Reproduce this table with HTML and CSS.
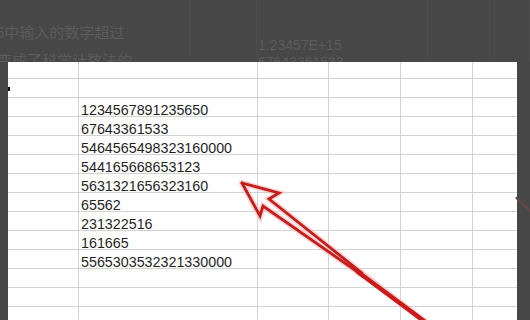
FILE: index.html
```html
<!DOCTYPE html>
<html>
<head>
<meta charset="utf-8">
<link rel="stylesheet" href="styles.css">
</head>
<body>
<div class="page">
  <div class="top">
    <div class="tcol c1">
      <div class="faint cjk l1">6中输入的数字超过</div>
      <div class="faint cjk l2">变成了科学计数法的</div>
    </div>
    <div class="tcol c2"></div>
    <div class="tcol c3">
      <div class="faint num">1.23457E+15</div>
      <div class="faint num">67643361533</div>
    </div>
    <div class="tcol c4"></div>
    <div class="tcol c5"></div>
  </div>
  <div class="main">
    <div class="sheet">
      <div class="cell"></div><div class="cell"></div><div class="cell"></div><div class="cell"></div><div class="cell"></div><div class="cell last"></div>
      <div class="cell mark"></div><div class="cell"></div><div class="cell"></div><div class="cell"></div><div class="cell"></div><div class="cell last"></div>
      <div class="cell"></div><div class="cell val">1234567891235650</div><div class="cell"></div><div class="cell"></div><div class="cell"></div><div class="cell last"></div>
      <div class="cell"></div><div class="cell val">67643361533</div><div class="cell"></div><div class="cell"></div><div class="cell"></div><div class="cell last"></div>
      <div class="cell"></div><div class="cell val">5464565498323160000</div><div class="cell"></div><div class="cell"></div><div class="cell"></div><div class="cell last"></div>
      <div class="cell"></div><div class="cell val">544165668653123</div><div class="cell"></div><div class="cell"></div><div class="cell"></div><div class="cell last"></div>
      <div class="cell"></div><div class="cell val">5631321656323160</div><div class="cell"></div><div class="cell"></div><div class="cell"></div><div class="cell last"></div>
      <div class="cell"></div><div class="cell val">65562</div><div class="cell"></div><div class="cell"></div><div class="cell"></div><div class="cell last"></div>
      <div class="cell"></div><div class="cell val">231322516</div><div class="cell"></div><div class="cell"></div><div class="cell"></div><div class="cell last"></div>
      <div class="cell"></div><div class="cell val">161665</div><div class="cell"></div><div class="cell"></div><div class="cell"></div><div class="cell last"></div>
      <div class="cell"></div><div class="cell val">5565303532321330000</div><div class="cell"></div><div class="cell"></div><div class="cell"></div><div class="cell last"></div>
      <div class="cell"></div><div class="cell"></div><div class="cell"></div><div class="cell"></div><div class="cell"></div><div class="cell last"></div>
      <div class="cell"></div><div class="cell"></div><div class="cell"></div><div class="cell"></div><div class="cell"></div><div class="cell last"></div>
      <div class="cell"></div><div class="cell"></div><div class="cell"></div><div class="cell"></div><div class="cell"></div><div class="cell last"></div>
    </div>
  </div>
  <svg class="arrow" width="530" height="320" viewBox="0 0 530 320">
    <g fill="none" stroke-linejoin="miter" stroke-linecap="round">
      <g stroke="#f6c2c2" stroke-width="6" opacity="0.7">
        <polyline points="242,183 279,193 269,199 362,273 432,327"/>
        <polyline points="242,183 260,216 263,206 362,275"/>
      </g>
      <g stroke="#c51c1c" stroke-width="2.8">
        <polyline points="242,183 279,193 269,199 362,273"/>
        <polyline points="242,183 260,216 263,206 362,275"/>
      </g>
      <line x1="358" y1="272" x2="432" y2="327" stroke="#cc1a1a" stroke-width="4.5"/>
      <line x1="517" y1="198" x2="532" y2="213" stroke="#5e4848" stroke-width="3"/>
    </g>
  </svg>
</div>
</body>
</html>
```

FILE: styles.css
```css
html, body {
  margin: 0;
  padding: 0;
}

body {
  width: 530px;
  height: 320px;
  overflow: hidden;
  background: #474747;
}

.page {
  position: relative;
  width: 530px;
  height: 320px;
  overflow: hidden;
  background: #474747;
}

.top {
  height: 62px;
  overflow: hidden;
  display: grid;
  grid-template-columns: 190px 67px 171px 67px 35px;
}

.tcol {
  border-right: 1px solid #4d4d4d;
  box-sizing: border-box;
  white-space: nowrap;
  overflow: visible;
}

.c1 {
  padding-top: 18px;
}

.c3 {
  padding-top: 37px;
  padding-left: 1px;
}

.faint {
  color: #5c5c5c;
}

.cjk {
  font-family: "Noto Sans CJK SC", "Noto Sans", sans-serif;
  font-size: 15px;
  line-height: 28px;
  height: 28px;
}

.l1 {
  margin-left: -4px;
}

.l2 {
  margin-left: -3px;
}

.num {
  font-family: "Liberation Sans", Arial, sans-serif;
  font-size: 14px;
  line-height: 17px;
}

.main {
  display: flex;
  padding-left: 8px;
  height: 258px;
}

.sheet {
  width: 509px;
  height: 258px;
  overflow: hidden;
  background: #ffffff;
  display: grid;
  grid-template-columns: 71px 179px 71px 72px 72px 44px;
  grid-template-rows: 17px repeat(13, 19px);
}

.cell {
  box-sizing: border-box;
  border-right: 1px solid #d3d3d3;
  border-bottom: 1px solid #d3d3d3;
  font-family: "Liberation Sans", Arial, sans-serif;
  font-size: 14.3px;
  color: #1f1f1f;
  white-space: nowrap;
  overflow: visible;
  padding-left: 2px;
  padding-top: 4px;
  line-height: 17px;
}

.cell.last {
  border-right: none;
}

.mark {
  position: relative;
}

.mark::before {
  content: "";
  position: absolute;
  left: 0;
  top: 8px;
  width: 2px;
  height: 4px;
  background: #111;
}

.arrow {
  position: absolute;
  left: 0;
  top: 0;
  pointer-events: none;
}
```
